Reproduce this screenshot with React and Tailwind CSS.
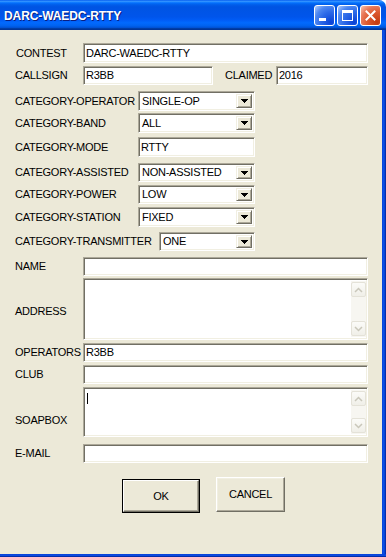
import React from "react";

const font = { fontFamily: '"Liberation Sans", Arial, sans-serif' };

const sunken =
  "bg-white border border-t-[#aca899] border-l-[#aca899] border-b-white border-r-white shadow-[inset_1px_1px_0_#716f64,inset_-1px_-1px_0_#f1efe2]";

function Label({ w, children, className = "" }) {
  return (
    <div className={`shrink-0 text-[11px] tracking-[-0.25px] text-black leading-none ${className}`} style={{ width: w }}>
      {children}
    </div>
  );
}

function Input({ value, className = "" }) {
  return (
    <div className={`${sunken} h-full flex items-center pl-[2px] text-[11px] tracking-[-0.25px] leading-none text-black ${className}`}>
      {value}
    </div>
  );
}

function Triangle() {
  return (
    <svg width="7" height="4" viewBox="0 0 7 4" shapeRendering="crispEdges">
      <rect x="0" y="0" width="7" height="1" fill="#000" />
      <rect x="1" y="1" width="5" height="1" fill="#000" />
      <rect x="2" y="2" width="3" height="1" fill="#000" />
      <rect x="3" y="3" width="1" height="1" fill="#000" />
    </svg>
  );
}

function Select({ value, className = "" }) {
  return (
    <div className={`${sunken} h-full flex items-stretch p-[2px] ${className}`}>
      <div className="flex-1 flex items-center pl-[1px] text-[11px] tracking-[-0.25px] leading-none text-black">{value}</div>
      <div className="w-[16px] flex items-center justify-center bg-[#ece9d8] border border-t-[#f1efe2] border-l-[#f1efe2] border-b-[#716f64] border-r-[#716f64] shadow-[inset_1px_1px_0_#ffffff,inset_-1px_-1px_0_#aca899]">
        <Triangle />
      </div>
    </div>
  );
}

function ScrollBtn({ up }) {
  return (
    <div className="h-[15px] w-full flex items-center justify-center rounded-[2px] border border-[#e4e2d8] bg-[linear-gradient(180deg,#fbfbf8,#f0efe8)]">
      <svg width="9" height="6" viewBox="0 0 9 6">
        {up ? (
          <polyline points="1,5 4.5,1.5 8,5" fill="none" stroke="#c9c7ba" strokeWidth="1.5" />
        ) : (
          <polyline points="1,1 4.5,4.5 8,1" fill="none" stroke="#c9c7ba" strokeWidth="1.5" />
        )}
      </svg>
    </div>
  );
}

function TextArea({ caret }) {
  return (
    <div className={`${sunken} h-full flex p-[2px] pr-[1px]`}>
      <div className="flex-1 relative">
        {caret && <div className="absolute left-[1px] top-[3px] w-[1px] h-[11px] bg-black" />}
      </div>
      <div className="w-[15px] flex flex-col justify-between bg-[#f7f6f1] py-[1px]">
        <ScrollBtn up />
        <ScrollBtn />
      </div>
    </div>
  );
}

function TitleButton({ kind }) {
  const blue =
    "bg-[radial-gradient(circle_at_85%_85%,#0a42d6_0%,#2d6ae8_45%,#4d86f0_70%,#9fc0fa_95%)]";
  const red =
    "bg-[radial-gradient(circle_at_85%_85%,#c43b10_0%,#dd5a30_45%,#e8795a_70%,#f5b9a3_95%)]";
  return (
    <div
      className={`w-[21px] h-[21px] rounded-[3px] border border-white relative flex items-center justify-center ${
        kind === "close" ? red : blue
      }`}
    >
      {kind === "min" && <div className="absolute left-[4px] top-[12px] w-[7px] h-[3px] bg-white" />}
      {kind === "max" && (
        <div className="w-[11px] h-[11px] border border-white border-t-[3px]" />
      )}
      {kind === "close" && (
        <svg width="11" height="11" viewBox="0 0 11 11">
          <path d="M1.5 1.5 L9.5 9.5 M9.5 1.5 L1.5 9.5" stroke="#fff" strokeWidth="2" strokeLinecap="square" />
        </svg>
      )}
    </div>
  );
}

export default function App() {
  const catRows = [
    { label: "CATEGORY-OPERATOR", value: "SINGLE-OP", mt: "mt-[6px]", h: "h-[20px]", sel: true },
    { label: "CATEGORY-BAND", value: "ALL", mt: "mt-[2px]", h: "h-[20px]", sel: true },
    { label: "CATEGORY-MODE", value: "RTTY", mt: "mt-[4px]", h: "h-[20px]", sel: false },
    { label: "CATEGORY-ASSISTED", value: "NON-ASSISTED", mt: "mt-[6px]", h: "h-[19px]", sel: true },
    { label: "CATEGORY-POWER", value: "LOW", mt: "mt-[3px]", h: "h-[19px]", sel: true },
    { label: "CATEGORY-STATION", value: "FIXED", mt: "mt-[3px]", h: "h-[20px]", sel: true },
  ];

  return (
    <div className="w-[386px] h-[557px] flex flex-col overflow-hidden" style={font}>
      {/* Title bar */}
      <div className="h-[30px] shrink-0 flex items-center justify-between rounded-tr-[7px] bg-[linear-gradient(180deg,#0058ee_0%,#3593ff_4%,#288eff_6%,#127dff_8%,#036ffc_10%,#0262ee_14%,#0057e5_20%,#0054e3_24%,#0055eb_56%,#005bf5_66%,#026afe_76%,#0062ef_86%,#0052d6_92%,#0040ab_94%,#003092_100%)]">
        <div
          className="pl-[4px] pt-[2px] text-white font-bold text-[12px] tracking-[-0.1px] leading-none [text-shadow:1px_1px_0_#0a1e80]"
          style={{ fontFamily: '"Liberation Sans", Arial, sans-serif' }}
        >
          DARC-WAEDC-RTTY
        </div>
        <div className="flex gap-[2px] pr-[5px]">
          <TitleButton kind="min" />
          <TitleButton kind="max" />
          <TitleButton kind="close" />
        </div>
      </div>

      <div className="flex-1 flex min-h-0">
        {/* Content */}
        <div className="flex-1 bg-[#ece9d8] flex flex-col pl-[15px] pr-[14px] pt-[13px]">
          <div className="flex items-center h-[20px]">
            <Label w={68} className="pl-[1px]">CONTEST</Label>
            <Input value="DARC-WAEDC-RTTY" className="flex-1" />
          </div>
          <div className="flex items-center h-[19px] mt-[3px]">
            <Label w={68}>CALLSIGN</Label>
            <Input value="R3BB" className="w-[130px]" />
            <Label w={51} className="ml-[12px]">CLAIMED</Label>
            <Input value="2016" className="flex-1" />
          </div>

          {catRows.map((r) => (
            <div key={r.label} className={`flex items-center ${r.h} ${r.mt}`}>
              <Label w={123}>{r.label}</Label>
              {r.sel ? (
                <Select value={r.value} className="w-[117px]" />
              ) : (
                <Input value={r.value} className="w-[117px]" />
              )}
            </div>
          ))}

          <div className="flex items-center h-[19px] mt-[5px]">
            <Label w={144}>CATEGORY-TRANSMITTER</Label>
            <Select value="ONE" className="w-[96px]" />
          </div>

          <div className="flex items-center h-[19px] mt-[6px]">
            <Label w={68}>NAME</Label>
            <Input value="" className="flex-1" />
          </div>
          <div className="flex items-center h-[62px] mt-[2px]">
            <Label w={68} className="pt-[4px]">ADDRESS</Label>
            <div className="flex-1 h-full">
              <TextArea />
            </div>
          </div>
          <div className="flex items-center h-[19px] mt-[3px]">
            <Label w={68}>OPERATORS</Label>
            <Input value="R3BB" className="flex-1" />
          </div>
          <div className="flex items-center h-[19px] mt-[3px]">
            <Label w={68}>CLUB</Label>
            <Input value="" className="flex-1" />
          </div>
          <div className="flex items-center h-[50px] mt-[3px]">
            <Label w={68} className="pt-[16px]">SOAPBOX</Label>
            <div className="flex-1 h-full">
              <TextArea caret />
            </div>
          </div>
          <div className="flex items-center h-[19px] mt-[7px]">
            <Label w={68}>E-MAIL</Label>
            <Input value="" className="flex-1" />
          </div>

          <div className="flex items-start mt-[14px]">
            <div className="ml-[107px] mt-[2px] w-[78px] h-[34px] border border-black bg-[#ece9d8]">
              <div className="w-full h-full flex items-center justify-center border border-t-white border-l-white border-b-[#716f64] border-r-[#716f64] shadow-[inset_-1px_-1px_0_#aca899] text-[11px] tracking-[-0.25px] leading-none">
                OK
              </div>
            </div>
            <div className="ml-[16px] w-[69px] h-[35px] flex items-center justify-center bg-[#ece9d8] border border-t-white border-l-white border-b-[#716f64] border-r-[#716f64] shadow-[inset_-1px_-1px_0_#aca899,inset_1px_1px_0_#f1efe2] text-[11px] tracking-[-0.25px] leading-none">
              CANCEL
            </div>
          </div>
        </div>
        {/* Right frame */}
        <div className="w-[4px] bg-[linear-gradient(90deg,#0842d6,#0a50ea_40%,#0840cc_75%,#001e8c)]" />
      </div>
      {/* Bottom frame */}
      <div className="h-[3px] shrink-0 bg-[linear-gradient(180deg,#0842d6,#0a4ae0_50%,#001e8c)]" />
    </div>
  );
}
